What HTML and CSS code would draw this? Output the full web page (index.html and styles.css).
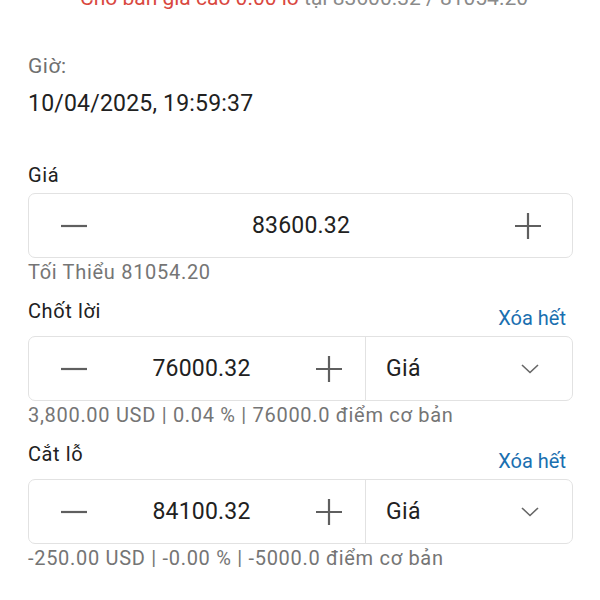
FILE: index.html
```html
<html>
  <head>
    <meta charset="utf-8">
    <link rel="stylesheet" href="styles.css">
  </head>
  <body>
    <div class="sheet">
      <!-- Order summary line (scrolled mostly out of view) -->
      <div class="summary">
        <span class="summary-side">Chờ bán giá cao 0.00 lô</span>
        <span class="summary-rest">tại 83600.32 / 81054.20</span>
      </div>

      <div class="time-block">
        <div class="time-label">Giờ:</div>
        <div class="time-value">10/04/2025, 19:59:37</div>
      </div>

      <!-- Price -->
      <div class="field">
        <div class="field-head tight">
          <span class="field-label">Giá</span>
        </div>
        <div class="box">
          <div class="stepper full">
            <button class="step-btn">
              <svg width="28" height="28" viewBox="0 0 28 28"><path d="M1 14H27" stroke="#5f5f5f" stroke-width="2.2"/></svg>
            </button>
            <span class="step-value">83600.32</span>
            <button class="step-btn">
              <svg width="28" height="28" viewBox="0 0 28 28"><path d="M1 14H27M14 1V27" stroke="#5f5f5f" stroke-width="2.2"/></svg>
            </button>
          </div>
        </div>
        <div class="hint">Tối Thiểu 81054.20</div>
      </div>

      <!-- Take profit -->
      <div class="field">
        <div class="field-head">
          <span class="field-label">Chốt lời</span>
          <a class="clear-link">Xóa hết</a>
        </div>
        <div class="box">
          <div class="stepper">
            <button class="step-btn">
              <svg width="28" height="28" viewBox="0 0 28 28"><path d="M1 14H27" stroke="#5f5f5f" stroke-width="2.2"/></svg>
            </button>
            <span class="step-value">76000.32</span>
            <button class="step-btn">
              <svg width="28" height="28" viewBox="0 0 28 28"><path d="M1 14H27M14 1V27" stroke="#5f5f5f" stroke-width="2.2"/></svg>
            </button>
          </div>
          <div class="select">
            <span>Giá</span>
            <svg width="18" height="10" viewBox="0 0 18 10"><path d="M1 1L9 8.5L17 1" fill="none" stroke="#666" stroke-width="1.6"/></svg>
          </div>
        </div>
        <div class="hint">3,800.00 USD | 0.04 % | 76000.0 điểm cơ bản</div>
      </div>

      <!-- Stop loss -->
      <div class="field">
        <div class="field-head">
          <span class="field-label">Cắt lỗ</span>
          <a class="clear-link">Xóa hết</a>
        </div>
        <div class="box">
          <div class="stepper">
            <button class="step-btn">
              <svg width="28" height="28" viewBox="0 0 28 28"><path d="M1 14H27" stroke="#5f5f5f" stroke-width="2.2"/></svg>
            </button>
            <span class="step-value">84100.32</span>
            <button class="step-btn">
              <svg width="28" height="28" viewBox="0 0 28 28"><path d="M1 14H27M14 1V27" stroke="#5f5f5f" stroke-width="2.2"/></svg>
            </button>
          </div>
          <div class="select">
            <span>Giá</span>
            <svg width="18" height="10" viewBox="0 0 18 10"><path d="M1 1L9 8.5L17 1" fill="none" stroke="#666" stroke-width="1.6"/></svg>
          </div>
        </div>
        <div class="hint">-250.00 USD | -0.00 % | -5000.0 điểm cơ bản</div>
      </div>
    </div>
  </body>
</html>
```

FILE: styles.css
```css
* {
  box-sizing: border-box;
  margin: 0;
  padding: 0;
}

body {
  background: #fff;
  font-family: Roboto, 'Noto Sans', sans-serif;
  color: #212121;
  overflow: hidden;
}

.sheet {
  padding: 0 27px 0 28px;
}

.summary {
  margin-top: -13px;
  padding-left: 52px;
  font-size: 21px;
  line-height: 22px;
  white-space: nowrap;
}

.summary-side {
  color: #d9483f;
}

.summary-rest {
  color: #8a8a8a;
}

.time-label {
  margin-top: 45px;
  font-size: 21px;
  line-height: 24px;
  letter-spacing: 0.5px;
  color: #707070;
}

.time-value {
  margin-top: 14px;
  font-size: 23px;
  line-height: 24px;
  letter-spacing: 0.2px;
  color: #212121;
}

.time-block + .field {
  margin-top: 47px;
}

.field + .field {
  margin-top: 15px;
}

.field-head {
  display: flex;
  justify-content: space-between;
  align-items: flex-start;
  height: 24px;
  margin-bottom: 13px;
}

.field-head.tight {
  margin-bottom: 6px;
}

.field-label {
  font-size: 20px;
  line-height: 24px;
  letter-spacing: 0.6px;
}

.clear-link {
  margin-top: 7px;
  margin-right: 7px;
  font-size: 20px;
  line-height: 24px;
  color: #1a6fb0;
  cursor: pointer;
}

.box {
  display: flex;
  height: 65px;
  border: 1px solid #e2e2e2;
  border-radius: 7px;
}

.stepper {
  display: flex;
  align-items: center;
  justify-content: space-between;
  width: 337px;
  padding: 0 22px 0 31px;
  border-right: 1px solid #e2e2e2;
}

.stepper.full {
  width: 100%;
  padding: 0 30px 0 31px;
  border-right: none;
}

.step-btn {
  display: flex;
  background: none;
  border: none;
  cursor: pointer;
}

.step-value {
  font-size: 23px;
  letter-spacing: 0.2px;
  color: #212121;
}

.select {
  flex: 1;
  display: flex;
  align-items: center;
  justify-content: space-between;
  padding: 0 33px 0 20px;
  font-size: 23px;
  letter-spacing: 0.4px;
}

.hint {
  margin-top: 2px;
  font-size: 20px;
  line-height: 24px;
  letter-spacing: 0.7px;
  color: #757575;
}
```
